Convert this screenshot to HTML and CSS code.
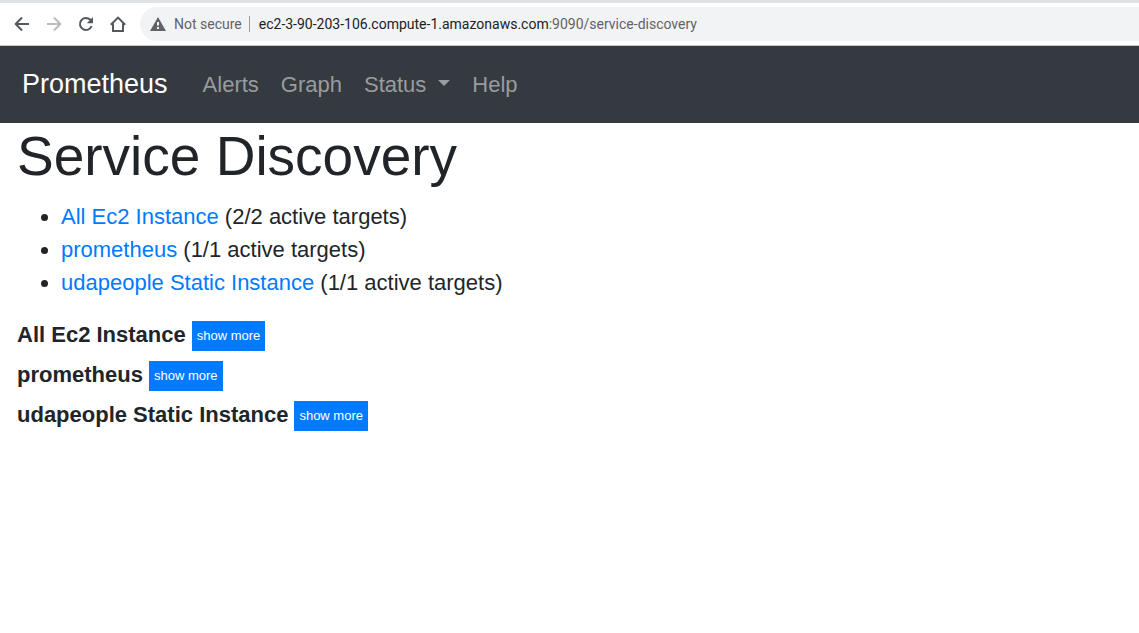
FILE: index.html
```html
<!DOCTYPE html>
<html lang="en">
<head>
<meta charset="utf-8">
<meta name="viewport" content="width=device-width, initial-scale=1">
<title>Prometheus - Service Discovery</title>
<link rel="stylesheet" href="styles.css">
</head>
<body>
<header class="browser-bar">
  <button class="tool" type="button" aria-label="Back"><svg viewBox="0 0 16 16"><path d="M15 8H2M8 1.5 1.7 8 8 14.5"/></svg></button>
  <button class="tool tool-disabled" type="button" aria-label="Forward" disabled><svg viewBox="0 0 16 16"><path d="M1 8h13M8 1.5 14.3 8 8 14.5"/></svg></button>
  <button class="tool" type="button" aria-label="Reload"><svg viewBox="0 0 16 16"><path d="M13.6 10A6 6 0 1 1 12.3 3.8L13.5 5"/><path class="solid" d="M15 1v6.2H8.8z"/></svg></button>
  <button class="tool" type="button" aria-label="Home"><svg viewBox="0 0 16 16"><path d="M.8 8.8 8 1.6l7.2 7.2M3 7.5V15h10V7.5"/></svg></button>
  <div class="address">
    <svg class="warning" viewBox="0 0 16 14"><path fill-rule="evenodd" d="M8 0 16 14H0zM7 5v3.5h2V5zM7 10v2h2v-2z"/></svg>
    <span class="security">Not secure</span>
    <div class="url" role="textbox" aria-label="Address"><span class="host">ec2-3-90-203-106.compute-1.amazonaws.com</span>:9090/service-discovery</div>
  </div>
</header>
<nav class="navbar">
  <a class="brand" href="#">Prometheus</a>
  <a class="nav-link" href="#">Alerts</a>
  <a class="nav-link" href="#">Graph</a>
  <a class="nav-link dropdown" href="#" aria-haspopup="true">Status</a>
  <a class="nav-link" href="#">Help</a>
</nav>
<main class="content">
  <h1>Service Discovery</h1>
  <ul class="targets">
    <li><a href="#ec2">All Ec2 Instance</a> (2/2 active targets)</li>
    <li><a href="#prometheus">prometheus</a> (1/1 active targets)</li>
    <li><a href="#static">udapeople Static Instance</a> (1/1 active targets)</li>
  </ul>
  <div class="jobs">
    <section class="job" id="ec2"><h2>All Ec2 Instance</h2><button class="more" type="button">show more</button></section>
    <section class="job" id="prometheus"><h2>prometheus</h2><button class="more" type="button">show more</button></section>
    <section class="job" id="static"><h2>udapeople Static Instance</h2><button class="more" type="button">show more</button></section>
  </div>
</main>
</body>
</html>
```
FILE: styles.css
```css
* {
  box-sizing: border-box;
}

body {
  margin: 0;
  background: #fff;
  color: #212529;
  font: 22px/33px "Liberation Sans", Arial, sans-serif;
}

a {
  color: #007bff;
  text-decoration: none;
}

.browser-bar {
  display: flex;
  align-items: center;
  gap: 16px;
  padding: 4px 0 4px 14px;
  border-top: 3px solid #dee1e6;
  border-bottom: 1px solid #c8cacd;
}

.tool {
  width: 16px;
  height: 16px;
  padding: 0;
  border: 0;
  background: none;
  color: #55585d;
}

.tool-disabled {
  color: #babcbe;
}

.tool svg {
  display: block;
  fill: none;
  stroke: currentColor;
  stroke-width: 2;
}

.tool .solid {
  fill: currentColor;
  stroke: none;
}

.address {
  display: flex;
  flex: 1;
  align-items: center;
  height: 34px;
  margin-left: -2px;
  padding-left: 10px;
  border-radius: 17px 0 0 17px;
  background: #f1f3f4;
  color: #5f6368;
  font: 14px/16px Roboto, "Noto Sans", sans-serif;
  white-space: nowrap;
}

.warning {
  width: 16px;
  height: 14px;
  margin-right: 8px;
  fill: #5f6368;
}

.security {
  padding-right: 7px;
  border-right: 1px solid #9a9da1;
}

.url {
  padding-left: 9px;
}

.host {
  color: #202124;
}

.navbar {
  display: flex;
  align-items: center;
  padding: 11px 22px;
  background: #343a40;
}

.brand {
  margin-right: 24px;
  color: #fff;
  font-size: 27px;
}

.nav-link {
  padding: 11px;
  color: #999c9f;
}

.dropdown::after {
  content: "";
  display: inline-block;
  margin-left: 12px;
  vertical-align: 6px;
  border: 6px solid transparent;
  border-top-color: currentColor;
  border-bottom: 0;
}

.content {
  padding: 0 17px;
}

h1 {
  margin: 0 0 11px;
  font-size: 55px;
  font-weight: 400;
  line-height: 66px;
}

.targets {
  margin: 0 0 22px;
  padding-left: 44px;
}

.jobs {
  display: grid;
  gap: 10px;
}

.job {
  display: flex;
  align-items: center;
  gap: 6px;
}

h2 {
  margin: 0;
  padding-bottom: 2px;
  font-size: 22px;
  line-height: 26px;
}

.more {
  height: 30px;
  padding: 0 5px;
  border: 0;
  background: #007bff;
  color: #fff;
  font: 13px/20px "Liberation Sans", Arial, sans-serif;
}
```
